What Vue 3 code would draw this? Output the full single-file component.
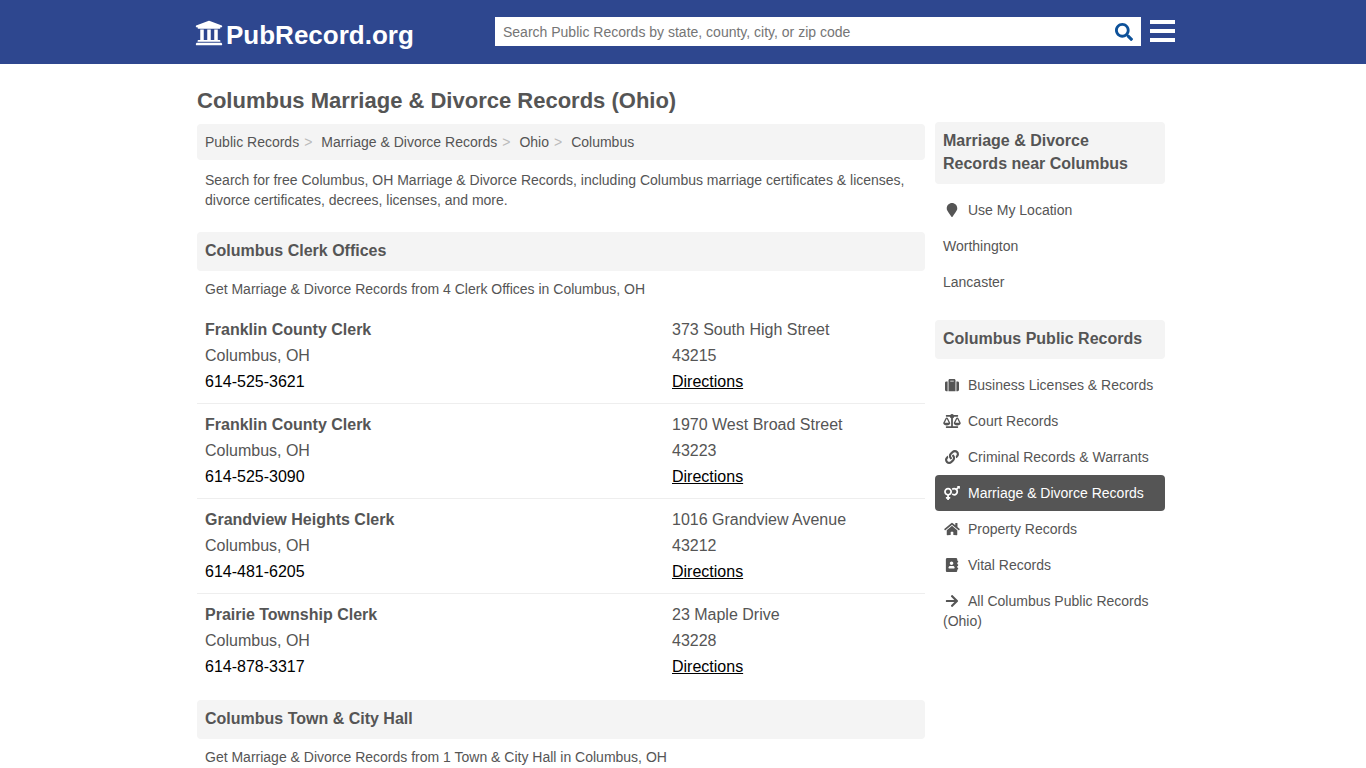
<script setup>
import { ref } from 'vue'

const query = ref('')

const crumbs = ['Public Records', 'Marriage & Divorce Records', 'Ohio', 'Columbus']

const clerks = [
  { name: 'Franklin County Clerk', phone: '614-525-3621', street: '373 South High Street', zip: '43215' },
  { name: 'Franklin County Clerk', phone: '614-525-3090', street: '1970 West Broad Street', zip: '43223' },
  { name: 'Grandview Heights Clerk', phone: '614-481-6205', street: '1016 Grandview Avenue', zip: '43212' },
  { name: 'Prairie Township Clerk', phone: '614-878-3317', street: '23 Maple Drive', zip: '43228' }
]

const pin = {
  box: '0 0 384 512',
  d: 'M172.268 501.67C26.97 291.031 0 269.413 0 192 0 85.961 85.961 0 192 0s192 85.961 192 192c0 77.413-26.97 99.031-172.268 309.67-9.535 13.774-29.93 13.773-39.464 0z'
}

const nearby = [
  { label: 'Use My Location', icon: pin },
  { label: 'Worthington' },
  { label: 'Lancaster' }
]

const categories = [
  {
    label: 'Business Licenses & Records',
    icon: {
      box: '0 0 512 512',
      d: 'M128 480h256V80c0-26.5-21.5-48-48-48H176c-26.5 0-48 21.5-48 48v400zm64-384h128v32H192V96zm320 80v256c0 26.5-21.5 48-48 48h-48V128h48c26.5 0 48 21.5 48 48zM96 480H48c-26.5 0-48-21.5-48-48V176c0-26.5 21.5-48 48-48h48v352z'
    }
  },
  {
    label: 'Court Records',
    icon: {
      box: '0 0 640 512',
      d: 'M256 336h-.02c0-16.18 1.34-8.73-85.05-181.51-17.65-35.29-68.19-35.36-85.87 0C-2.06 328.75.02 320.33.02 336H0c0 44.18 57.31 80 128 80s128-35.82 128-80zM128 176l72 144H56l72-144zm511.98 160c0-16.18 1.34-8.73-85.05-181.51-17.65-35.29-68.19-35.36-85.87 0-87.12 174.26-85.04 165.84-85.04 181.51H384c0 44.18 57.31 80 128 80s128-35.82 128-80h-.02zM440 320l72-144 72 144H440zm88 128H352V153.25c23.51-10.29 41.16-31.48 46.39-57.25H528c8.84 0 16-7.16 16-16V48c0-8.84-7.16-16-16-16H383.64C369.04 12.68 346.09 0 320 0s-49.04 12.68-63.64 32H112c-8.84 0-16 7.16-16 16v32c0 8.84 7.16 16 16 16h129.61c5.23 25.76 22.87 46.96 46.39 57.25V448H112c-8.84 0-16 7.16-16 16v32c0 8.84 7.16 16 16 16h416c8.84 0 16-7.16 16-16v-32c0-8.84-7.16-16-16-16z'
    }
  },
  {
    label: 'Criminal Records & Warrants',
    icon: {
      box: '0 0 512 512',
      d: 'M326.612 185.391c59.747 59.809 58.927 155.698.36 214.59-.11.12-.24.25-.36.37l-67.2 67.2c-59.27 59.27-155.699 59.262-214.96 0-59.27-59.26-59.27-155.7 0-214.96l37.106-37.106c9.84-9.84 26.786-3.3 27.294 10.606.648 17.722 3.826 35.527 9.69 52.721 1.986 5.822.567 12.262-3.783 16.612l-13.087 13.087c-28.026 28.026-28.905 73.66-1.155 101.96 28.024 28.579 74.086 28.749 102.325.51l67.2-67.19c28.191-28.191 28.073-73.757 0-101.83-3.701-3.694-7.429-6.564-10.341-8.569a16.037 16.037 0 0 1-6.947-12.606c-.396-10.567 3.348-21.456 11.698-29.806l21.054-21.055c5.521-5.521 14.182-6.199 20.584-1.731a152.482 152.482 0 0 1 20.522 17.197zM467.547 44.449c-59.261-59.262-155.69-59.27-214.96 0l-67.2 67.2c-.12.12-.25.25-.36.37-58.566 58.892-59.387 154.781.36 214.59a152.454 152.454 0 0 0 20.521 17.196c6.402 4.468 15.064 3.789 20.584-1.731l21.054-21.055c8.35-8.35 12.094-19.239 11.698-29.806a16.037 16.037 0 0 0-6.947-12.606c-2.912-2.005-6.64-4.875-10.341-8.569-28.073-28.073-28.191-73.639 0-101.83l67.2-67.19c28.239-28.239 74.3-28.069 102.325.51 27.75 28.3 26.872 73.934-1.155 101.96l-13.087 13.087c-4.35 4.35-5.769 10.79-3.783 16.612 5.864 17.194 9.042 34.999 9.69 52.721.509 13.906 17.454 20.446 27.294 10.606l37.106-37.106c59.271-59.259 59.271-155.699.001-214.959z'
    }
  },
  {
    label: 'Marriage & Divorce Records',
    active: true,
    icon: {
      box: '0 0 576 512',
      d: 'M564 0h-79c-10.7 0-16 12.9-8.5 20.5l16.9 16.9-48.7 48.7C422.5 72.1 396.2 64 368 64c-33.7 0-64.6 11.6-89.2 30.9 14 16.7 25 36 32.1 57.1 14.5-14.8 34.7-24 57.1-24 44.1 0 80 35.9 80 80s-35.9 80-80 80c-22.3 0-42.6-9.2-57.1-24-7.1 21.1-18 40.4-32.1 57.1 24.5 19.4 55.5 30.9 89.2 30.9 79.5 0 144-64.5 144-144 0-28.2-8.1-54.5-22.1-76.7l48.7-48.7 16.9 16.9c2.4 2.4 5.5 3.5 8.4 3.5 6.2 0 12.1-4.8 12.1-12V12c0-6.6-5.4-12-12-12zM144 64C64.5 64 0 128.5 0 208c0 68.5 47.9 125.9 112 140.4V400H76c-6.6 0-12 5.4-12 12v40c0 6.6 5.4 12 12 12h36v36c0 6.6 5.4 12 12 12h40c6.6 0 12-5.4 12-12v-36h36c6.6 0 12-5.4 12-12v-40c0-6.6-5.4-12-12-12h-36v-51.6c64.1-14.6 112-71.9 112-140.4 0-79.5-64.5-144-144-144zm0 224c-44.1 0-80-35.9-80-80s35.9-80 80-80 80 35.9 80 80-35.9 80-80 80z'
    }
  },
  {
    label: 'Property Records',
    icon: {
      box: '0 0 576 512',
      d: 'M280.37 148.26L96 300.11V464a16 16 0 0 0 16 16l112.06-.29a16 16 0 0 0 15.92-16V368a16 16 0 0 1 16-16h64a16 16 0 0 1 16 16v95.64a16 16 0 0 0 16 16.05L464 480a16 16 0 0 0 16-16V300L295.67 148.26a12.19 12.19 0 0 0-15.3 0zM571.6 251.47L488 182.56V44.05a12 12 0 0 0-12-12h-56a12 12 0 0 0-12 12v72.61L318.47 43a48 48 0 0 0-61 0L4.34 251.47a12 12 0 0 0-1.6 16.9l25.5 31A12 12 0 0 0 45.15 301l235.22-193.74a12.19 12.19 0 0 1 15.3 0L530.9 301a12 12 0 0 0 16.9-1.6l25.5-31a12 12 0 0 0-1.7-16.93z'
    }
  },
  {
    label: 'Vital Records',
    icon: {
      box: '0 0 448 512',
      d: 'M436 160c6.6 0 12-5.4 12-12v-40c0-6.6-5.4-12-12-12h-20V48c0-26.5-21.5-48-48-48H48C21.5 0 0 21.5 0 48v416c0 26.5 21.5 48 48 48h320c26.5 0 48-21.5 48-48v-48h20c6.6 0 12-5.4 12-12v-40c0-6.6-5.4-12-12-12h-20v-64h20c6.6 0 12-5.4 12-12v-40c0-6.6-5.4-12-12-12h-20v-64h20zm-228-32c35.3 0 64 28.7 64 64s-28.7 64-64 64-64-28.7-64-64 28.7-64 64-64zm112 236.8c0 10.6-10 19.2-22.4 19.2H118.4C106 384 96 375.4 96 364.8v-19.2c0-31.8 30.1-57.6 67.2-57.6h5c12.3 5.1 25.7 8 39.8 8s27.6-2.9 39.8-8h5c37.1 0 67.2 25.8 67.2 57.6v19.2z'
    }
  },
  {
    label: 'All Columbus Public Records (Ohio)',
    icon: {
      box: '0 0 448 512',
      d: 'M190.5 66.9l22.2-22.2c9.4-9.4 24.6-9.4 33.9 0L441 239c9.4 9.4 9.4 24.6 0 33.9L246.6 467.3c-9.4 9.4-24.6 9.4-33.9 0l-22.2-22.2c-9.5-9.5-9.3-25 .4-34.3L311.4 296H24c-13.3 0-24-10.7-24-24v-32c0-13.3 10.7-24 24-24h287.4L190.9 101.2c-9.8-9.3-10-24.8-.4-34.3z'
    }
  }
]

const menus = [
  { title: 'Marriage & Divorce Records near Columbus', items: nearby },
  { title: 'Columbus Public Records', items: categories }
]
</script>

<template>
  <div class="page">
    <header class="topbar">
      <div class="topbar-inner">
        <a class="logo" href="#">
          <svg class="logo-icon" viewBox="0 0 512 512" aria-hidden="true">
            <path d="M496 128v16a8 8 0 0 1-8 8h-24v12c0 6.627-5.373 12-12 12H60c-6.627 0-12-5.373-12-12v-12H24a8 8 0 0 1-8-8v-16a8 8 0 0 1 4.941-7.392l232-88a7.996 7.996 0 0 1 6.118 0l232 88A8 8 0 0 1 496 128zm-24 304H40c-13.255 0-24 10.745-24 24v16a8 8 0 0 0 8 8h464a8 8 0 0 0 8-8v-16c0-13.255-10.745-24-24-24zM96 192v192H60c-6.627 0-12 5.373-12 12v20h416v-20c0-6.627-5.373-12-12-12h-36V192h-64v192h-64V192h-64v192h-64V192H96z" />
          </svg>
          <span>PubRecord.org</span>
        </a>
        <form class="search" role="search" @submit.prevent>
          <input
            v-model="query"
            class="search-input"
            type="text"
            aria-label="Search Public Records"
            placeholder="Search Public Records by state, county, city, or zip code"
          />
          <button class="search-button" type="submit" aria-label="Search">
            <svg viewBox="0 0 512 512" aria-hidden="true">
              <path d="M505 442.7L405.3 343c-4.5-4.5-10.6-7-17-7H372c27.6-35.3 44-79.7 44-128C416 93.1 322.9 0 208 0S0 93.1 0 208s93.1 208 208 208c48.3 0 92.7-16.4 128-44v16.3c0 6.4 2.5 12.5 7 17l99.7 99.7c9.4 9.4 24.6 9.4 33.9 0l28.3-28.3c9.4-9.4 9.4-24.6.1-34zM208 336c-70.7 0-128-57.2-128-128 0-70.7 57.2-128 128-128 70.7 0 128 57.2 128 128 0 70.7-57.2 128-128 128z" />
            </svg>
          </button>
        </form>
        <button class="menu-button" type="button" aria-label="Menu">
          <svg viewBox="0 0 25 22" aria-hidden="true">
            <path d="M0 0h25v4H0zM0 9h25v4H0zM0 18h25v4H0z" />
          </svg>
        </button>
      </div>
    </header>

    <div class="columns">
      <main class="content">
        <h1>Columbus Marriage &amp; Divorce Records (Ohio)</h1>
        <nav class="crumbs" aria-label="Breadcrumb">
          <ol>
            <li v-for="crumb in crumbs" :key="crumb"><a href="#">{{ crumb }}</a></li>
          </ol>
        </nav>
        <p class="intro">
          Search for free Columbus, OH Marriage &amp; Divorce Records, including Columbus marriage
          certificates &amp; licenses, divorce certificates, decrees, licenses, and more.
        </p>

        <section class="section">
          <h2>Columbus Clerk Offices</h2>
          <p class="intro">Get Marriage &amp; Divorce Records from 4 Clerk Offices in Columbus, OH</p>
          <div v-for="clerk in clerks" :key="clerk.phone" class="office">
            <div class="office-main">
              <strong>{{ clerk.name }}</strong>
              <span>Columbus, OH</span>
              <a href="#">{{ clerk.phone }}</a>
            </div>
            <div class="office-side">
              <span>{{ clerk.street }}</span>
              <span>{{ clerk.zip }}</span>
              <a class="directions" href="#">Directions</a>
            </div>
          </div>
        </section>

        <section class="section">
          <h2>Columbus Town &amp; City Hall</h2>
          <p class="intro">Get Marriage &amp; Divorce Records from 1 Town &amp; City Hall in Columbus, OH</p>
        </section>
      </main>

      <aside class="sidebar">
        <nav v-for="menu in menus" :key="menu.title" class="side-menu" :aria-label="menu.title">
          <h2>{{ menu.title }}</h2>
          <ul>
            <li v-for="item in menu.items" :key="item.label">
              <a href="#" :class="{ active: item.active }"><svg v-if="item.icon" class="side-icon" :viewBox="item.icon.box" aria-hidden="true"><path :d="item.icon.d" /></svg>{{ item.label }}</a>
            </li>
          </ul>
        </nav>
      </aside>
    </div>
  </div>
</template>

<style>
body {
  margin: 0;
  background: #fff;
}
</style>

<style scoped>
.page {
  font-family: "Liberation Sans", Arial, sans-serif;
  font-size: 14px;
  line-height: 20px;
  color: #555;
}
h1,
h2,
p,
ol,
ul {
  margin: 0;
  padding: 0;
}
ol,
ul {
  list-style: none;
}
a {
  color: inherit;
  text-decoration: none;
}
button {
  padding: 0;
  border: 0;
  background: none;
  cursor: pointer;
}
svg {
  fill: currentColor;
}

.topbar {
  background: #2e478f;
  color: #fff;
}
.topbar-inner {
  display: flex;
  align-items: center;
  box-sizing: border-box;
  max-width: 984px;
  height: 64px;
  margin: 0 auto;
  padding: 0 0 2px 4px;
}
.logo {
  display: flex;
  align-items: center;
  gap: 3px;
  width: 300px;
  padding-top: 8px;
  font-size: 26px;
  line-height: 32px;
  font-weight: bold;
}
.logo-icon {
  width: 28px;
  height: 28px;
  margin-bottom: 4px;
}
.search {
  display: flex;
  flex: 1;
  box-sizing: border-box;
  height: 29px;
  background: #fff;
}
.search-input {
  flex: 1;
  min-width: 0;
  padding: 2px 8px 0;
  border: 0;
  outline: 0;
  background: transparent;
  font: inherit;
  color: #555;
}
.search-input::placeholder {
  color: #757575;
}
.search-button {
  display: flex;
  align-items: center;
  justify-content: center;
  width: 34px;
  padding-top: 2px;
  color: #0d5199;
}
.search-button svg {
  width: 18px;
  height: 18px;
}
.menu-button {
  display: flex;
  margin-left: 9px;
  color: #fff;
}
.menu-button svg {
  width: 25px;
  height: 22px;
}

.columns {
  display: flex;
  gap: 10px;
  box-sizing: border-box;
  max-width: 980px;
  margin: 0 auto;
  padding: 0 8px 0 4px;
}
.content {
  flex: 1;
  min-width: 0;
}
h1 {
  padding: 21px 0 7px;
  font-size: 22px;
  line-height: 32px;
}
h2 {
  padding: 7px 8px 9px;
  border-radius: 4px;
  background: #f4f4f4;
  font-size: 16px;
  line-height: 23px;
}
.crumbs {
  padding: 8px;
  border-radius: 4px;
  background: #f4f4f4;
}
.crumbs ol {
  display: flex;
  flex-wrap: wrap;
}
.crumbs li:not(:last-child)::after {
  content: ">";
  margin: 0 9px 0 5px;
  color: #bbb;
}
.intro {
  padding: 10px 8px;
}
.section {
  margin-top: 12px;
}
.section .intro {
  padding: 8px 8px 10px;
}
.office {
  display: flex;
  padding: 8px;
  font-size: 16px;
  line-height: 26px;
}
.office + .office {
  border-top: 1px solid #eee;
}
.office-main {
  flex: 1;
}
.office-side {
  width: 245px;
}
.office-main > *,
.office-side > * {
  display: block;
}
.office a {
  width: fit-content;
  color: #000;
}
.office .directions {
  text-decoration: underline;
}

.sidebar {
  width: 230px;
  padding-top: 58px;
}
.side-menu {
  margin-bottom: 20px;
}
.side-menu ul {
  padding-top: 8px;
}
.side-menu a {
  display: block;
  padding: 8px;
  border-radius: 4px;
}
.side-menu .active {
  background: #555;
  color: #fff;
}
.side-icon {
  width: 18px;
  height: 14px;
  margin-right: 7px;
  vertical-align: -2px;
}
</style>
